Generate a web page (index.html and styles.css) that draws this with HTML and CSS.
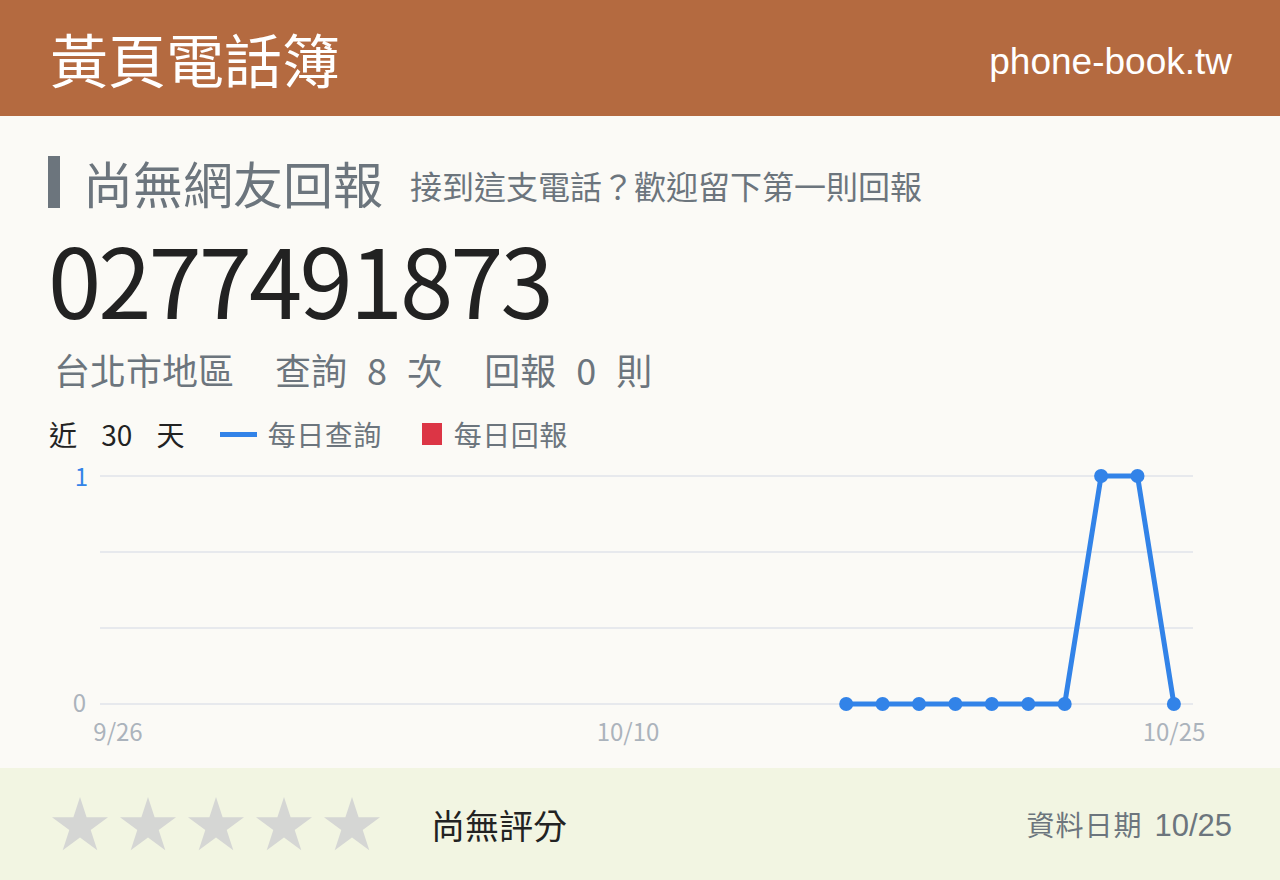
FILE: index.html
```html
<!DOCTYPE html>
<html lang="zh-Hant">
<head>
  <meta charset="UTF-8">
  <meta name="viewport" content="width=device-width, initial-scale=1.0">
  <title>0277491873 - 黃頁電話簿</title>
  <link rel="stylesheet" href="styles.css">
</head>
<body>

  <header class="topbar">
    <div class="brand">黃頁電話簿</div>
    <div class="domain">phone-book.tw</div>
  </header>

  <main class="content">
    <div class="status">
      <span class="status-bar"></span>
      <h1 class="status-title">尚無網友回報</h1>
      <span class="status-hint">接到這支電話？歡迎留下第一則回報</span>
    </div>

    <div class="number">0277491873</div>

    <div class="stats">
      <span>台北市地區</span>
      <span>查詢 8 次</span>
      <span>回報 0 則</span>
    </div>

    <div class="legend">
      <span class="range">近 30 天</span>
      <span class="swatch swatch-line"></span>
      <span class="legend-label">每日查詢</span>
      <span class="swatch swatch-box"></span>
      <span class="legend-label">每日回報</span>
    </div>

    <!-- 近 30 天查詢次數 -->
    <svg class="chart" width="1184" height="320" viewBox="48 448 1184 320">
      <g class="grid">
        <line x1="100" y1="476" x2="1193" y2="476"/>
        <line x1="100" y1="552" x2="1193" y2="552"/>
        <line x1="100" y1="628" x2="1193" y2="628"/>
        <line x1="100" y1="704" x2="1193" y2="704"/>
      </g>
      <text class="tick tick-max" x="88" y="486" text-anchor="end">1</text>
      <text class="tick" x="86" y="712" text-anchor="end">0</text>
      <text class="tick" x="118" y="741" text-anchor="middle">9/26</text>
      <text class="tick" x="628" y="741" text-anchor="middle">10/10</text>
      <text class="tick" x="1174" y="741" text-anchor="middle">10/25</text>
      <polyline class="series" points="846.2,704 882.6,704 919,704 955.4,704 991.8,704 1028.3,704 1064.7,704 1101.1,476 1137.5,476 1173.9,704"/>
      <g class="dots">
        <circle cx="846.2" cy="704" r="7"/>
        <circle cx="882.6" cy="704" r="7"/>
        <circle cx="919" cy="704" r="7"/>
        <circle cx="955.4" cy="704" r="7"/>
        <circle cx="991.8" cy="704" r="7"/>
        <circle cx="1028.3" cy="704" r="7"/>
        <circle cx="1064.7" cy="704" r="7"/>
        <circle cx="1101.1" cy="476" r="7"/>
        <circle cx="1137.5" cy="476" r="7"/>
        <circle cx="1173.9" cy="704" r="7"/>
      </g>
    </svg>
  </main>

  <footer class="footer">
    <div class="stars">
      <svg class="star" viewBox="0 0 56 54"><polygon points="28,0 34.6,20.3 56,20.3 38.7,32.9 45.3,53.2 28,40.6 10.7,53.2 17.3,32.9 0,20.3 21.4,20.3"/></svg>
      <svg class="star" viewBox="0 0 56 54"><polygon points="28,0 34.6,20.3 56,20.3 38.7,32.9 45.3,53.2 28,40.6 10.7,53.2 17.3,32.9 0,20.3 21.4,20.3"/></svg>
      <svg class="star" viewBox="0 0 56 54"><polygon points="28,0 34.6,20.3 56,20.3 38.7,32.9 45.3,53.2 28,40.6 10.7,53.2 17.3,32.9 0,20.3 21.4,20.3"/></svg>
      <svg class="star" viewBox="0 0 56 54"><polygon points="28,0 34.6,20.3 56,20.3 38.7,32.9 45.3,53.2 28,40.6 10.7,53.2 17.3,32.9 0,20.3 21.4,20.3"/></svg>
      <svg class="star" viewBox="0 0 56 54"><polygon points="28,0 34.6,20.3 56,20.3 38.7,32.9 45.3,53.2 28,40.6 10.7,53.2 17.3,32.9 0,20.3 21.4,20.3"/></svg>
    </div>
    <span class="rating">尚無評分</span>
    <div class="updated">
      <span class="updated-label">資料日期</span>
      <span class="updated-date">10/25</span>
    </div>
  </footer>

</body>
</html>
```

FILE: styles.css
```css
* {
  box-sizing: border-box;
}

body {
  margin: 0;
  width: 1280px;
  height: 880px;
  overflow: hidden;
  display: flex;
  flex-direction: column;
  background-color: #fbfaf6;
  color: #212529;
  font-family: "Noto Sans CJK TC", "Noto Sans", sans-serif;
}

/* top bar */
.topbar {
  height: 116px;
  flex: none;
  display: flex;
  align-items: center;
  justify-content: space-between;
  padding: 0 48px 0 50px;
  background-color: #b46a40;
  color: #fff;
}

.brand {
  font-size: 58px;
  line-height: 1;
}

.domain {
  padding-top: 7px;
  font-family: "Liberation Sans", Arial, sans-serif;
  font-size: 37px;
}

/* main block */
.content {
  flex: 1;
  padding: 40px 48px 0;
}

.status {
  display: flex;
  align-items: center;
  height: 52px;
}

.status-bar {
  width: 12px;
  height: 52px;
  background-color: #6c757d;
}

.status-title {
  margin: 0 0 0 23px;
  font-size: 50px;
  font-weight: normal;
  line-height: 52px;
  color: #6c757d;
}

.status-hint {
  margin-left: 27px;
  padding-top: 6px;
  font-size: 32px;
  line-height: 32px;
  color: #6c757d;
}

.number {
  margin-top: 22px;
  font-size: 96px;
  line-height: 96px;
  letter-spacing: -3px;
  color: #222;
}

.stats {
  display: flex;
  gap: 41px;
  margin: 25px 0 0 6px;
  font-size: 36px;
  line-height: 36px;
  word-spacing: 12px;
  color: #6c757d;
}

.legend {
  display: flex;
  align-items: center;
  height: 28px;
  margin-top: 33px;
  font-size: 28px;
  line-height: 28px;
}

.range {
  margin-left: 1px;
  word-spacing: 18px;
  color: #222;
}

.legend-label {
  color: #6c757d;
  letter-spacing: 0.5px;
}

.swatch {
  display: inline-block;
  background-color: #3283e8;
}

.swatch-line {
  width: 37px;
  height: 5px;
  margin: 0 11px 0 35px;
}

.swatch-box {
  width: 20px;
  height: 22px;
  margin: 0 12px 0 40px;
  background-color: #dc3545;
}

/* chart */
.chart {
  display: block;
}

.grid line {
  stroke: #e7e9ed;
  stroke-width: 2;
}

.tick {
  font-family: "Noto Sans CJK TC", sans-serif;
  font-size: 24px;
  fill: #abb3bc;
}

.tick-max {
  fill: #3283e8;
}

.series {
  fill: none;
  stroke: #3283e8;
  stroke-width: 5;
  stroke-linejoin: round;
}

.dots circle {
  fill: #3283e8;
}

/* bottom bar */
.footer {
  height: 112px;
  flex: none;
  display: flex;
  align-items: center;
  padding: 0 48px 0 52px;
  background-color: #f2f5e2;
}

.stars {
  display: flex;
  gap: 12px;
}

.star {
  width: 56px;
  height: 54px;
  fill: #d5d6d4;
}

.rating {
  margin-left: 51px;
  font-size: 34px;
  color: #222;
}

.updated {
  margin-left: auto;
  display: flex;
  align-items: baseline;
  color: #6c757d;
}

.updated-label {
  font-size: 28px;
  letter-spacing: 1px;
}

.updated-date {
  margin-left: 12px;
  font-family: "Liberation Sans", Arial, sans-serif;
  font-size: 31px;
}
```
